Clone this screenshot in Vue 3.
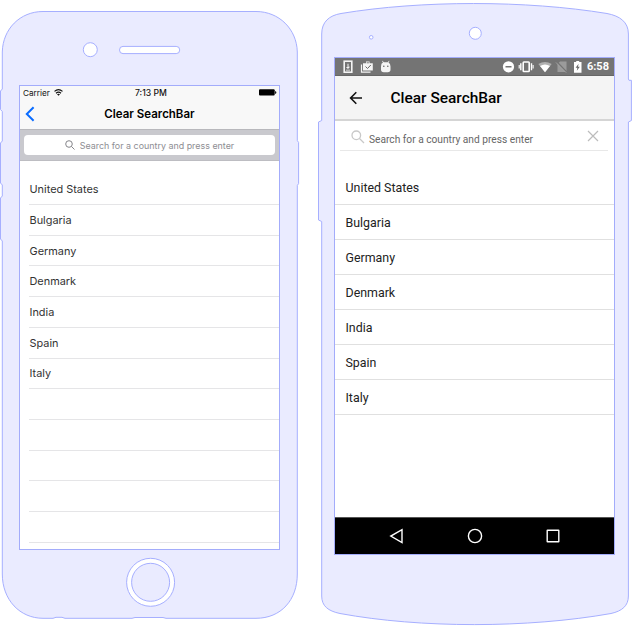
<script setup>
const countries = ['United States', 'Bulgaria', 'Germany', 'Denmark', 'India', 'Spain', 'Italy']
const iosRows = [...countries, '', '', '', '', '']
</script>

<template>
  <main class="stage">
    <section class="phone iphone">
      <svg class="shell" width="316" height="630" viewBox="0 0 316 630">
        <path class="body" d="M43 11.5H256C279 11.5 296.8 29 297.3 52V140.5L298.6 142.5V183.5L297.3 185.5V574C297.3 600 281 618.3 256 618.3H166L163 617.5H135L132 618.3H65L62 617.3H56L53 618.3H43C20 618.3 2.3 600 2.3 574V241L.5 239V198L2.3 196V185L.5 183V143L2.3 141V111.500L.5 109.500V91L2.300 89V52C2.800 29 20 11.500 43 11.500Z" />
        <circle class="hole" cx="90.300" cy="49.700" r="7" />
        <rect class="hole" x="119.500" y="46.400" width="60.200" height="7.200" rx="3.500" />
        <circle class="hole" cx="150.600" cy="582.300" r="24" />
        <circle class="body" cx="150.600" cy="582.300" r="19" />
      </svg>
      <div class="screen ios">
        <header class="ios-head">
          <div class="ios-status">
            <span class="carrier">Carrier</span>
            <svg class="wifi" width="9" height="7" viewBox="0 0 9 7" fill="none" stroke="#111" stroke-width="1.200">
              <path d="M.5 2.400Q4.500-1 8.500 2.400M2 4.200Q4.500 2.200 7 4.200" /><path d="M3 5.200 4.500 6.800 6 5.200Q4.500 4.200 3 5.200Z" fill="#111" stroke="none" />
            </svg>
            <span class="clock">7:13 PM</span>
            <svg class="battery" width="18" height="7" viewBox="0 0 18 7"><rect x="0" y=".3" width="15.700" height="6.200" rx="1" /><path d="M16.100 2.300h.7l.5.700v1l-.5.700h-.7z" /></svg>
          </div>
          <div class="ios-nav">
            <svg width="10" height="16" viewBox="0 0 10 16" fill="none" stroke="#0a6cff" stroke-width="2"><path d="M8.600 1.200 1.800 8 8.600 14.800" /></svg>
            <h1>Clear SearchBar</h1>
          </div>
        </header>
        <div class="ios-search">
          <div class="field">
            <svg width="10" height="10" viewBox="0 0 10 10" fill="none" stroke="#85858a" stroke-width="1"><circle cx="4" cy="4" r="3.300" /><path d="M6.400 6.400 9.500 9.500" /></svg>
            <span>Search for a country and press enter</span>
          </div>
        </div>
        <ul class="ios-list"><li v-for="(name, i) in iosRows" :key="i"><span>{{ name }}</span></li></ul>
      </div>
    </section>

    <section class="phone droid-phone">
      <svg class="shell" width="316" height="630" viewBox="0 0 316 630">
        <path class="body" d="M5.700 34C5.700 22 13 15.500 25 13.500C105 .2 210 .2 291 13.500C304 16 312.400 22 312.400 34V79L313 80.300H315.400V120.500L312.400 122V596C312.400 606 306 611 295 613.500C212 628.300 104 628.300 24 613.500C12 611 5.700 606 5.700 596V221.500L2.500 220V122L5.700 120.500Z" />
        <circle class="hole" cx="159.300" cy="33.300" r="6" /><circle class="hole" cx="55.200" cy="37.300" r="1.800" />
      </svg>
      <div class="screen droid">
        <div class="droid-status">
          <svg width="50" height="14" viewBox="0 0 50 14">
            <rect x="1.200" y="1.200" width="7.600" height="11" fill="none" stroke="#f4f4f4" stroke-width="1.600" />
            <path d="M4.500 3.800h1v3h1.600L5 9 2.900 7h1.600zM3 9.700h4v.8H3z" fill="#f4f4f4" />
            <path d="M18.500 4.500v7.700h9" fill="none" stroke="#f4f4f4" stroke-width="1.200" />
            <path d="M20 3.300h3V1.500h3.500v1.800h3.300v7.200H20z" fill="#f4f4f4" /><path d="M23.600 3.300v-1h2.300v1z" fill="#747474" /><path d="m22.500 6.500 2 2 3.300-3.500" fill="none" stroke="#666" />
            <path d="M38 6.400Q38 3.300 40 2.600L39 1l.5-.3 1.300 1.500h4L46 .7l.5.300-1 1.600Q47.500 3.700 47.500 6.400V9.500q0 2.700-2.700 2.700h-4Q38 12.200 38 9.500z" fill="#f4f4f4" /><circle cx="40.800" cy="6.200" r=".8" fill="#666" /><circle cx="44.800" cy="6.200" r=".8" fill="#666" />
          </svg>
          <span class="spacer"></span>
          <svg width="81" height="14" viewBox="0 0 81 14">
            <circle cx="6.500" cy="6.800" r="5.600" fill="#fff" /><path d="M3.500 6h6v1.500h-6z" fill="#747474" />
            <rect x="21.200" y="2" width="6" height="9.500" rx=".7" fill="none" stroke="#fff" stroke-width="1.600" /><path d="M18.800 3.300v7M29.500 3.300v7" stroke="#fff" stroke-width="1.400" /><path d="M17.200 5v3.600M31.100 5v3.600" stroke="#fff" stroke-width="1.100" />
            <path d="M36.300 4Q43-.1 49.700 4L43 12.200z" fill="#b0b0b0" /><path d="M38 6Q43 3 48 6L43 12.200z" fill="#fff" />
            <path d="M55.500 4 58 1.500h6.500V12h-9z" fill="#9b9b9b" /><path d="m54.500 1.500 10.500 11" stroke="#747474" stroke-width="1.600" /><path d="m54 2.500 10.200 10.200" stroke="#aaa" stroke-width=".8" />
            <path d="M72 2h2.200V.9h3V2h2.300v10.700H72z" fill="#fff" /><path d="m76.600 3.800-3 4h1.800l-.6 3 3-4H76z" fill="#666" />
          </svg>
          <span class="droid-clock">6:58</span>
        </div>
        <div class="toolbar">
          <svg width="14" height="14" viewBox="0 0 14 14" fill="none" stroke="#111" stroke-width="1.600"><path d="M7.300 1.300 1.600 7l5.700 5.700M1.600 7H13" /></svg>
          <h1>Clear SearchBar</h1>
        </div>
        <div class="droid-search">
          <svg class="mag" width="14" height="14" viewBox="0 0 14 14" fill="none" stroke="#c8c8c8" stroke-width="1.300"><circle cx="5.300" cy="5.300" r="4.300" /><path d="m8.500 8.500 4.500 4.500" /></svg>
          <span>Search for a country and press enter</span>
          <svg class="close" width="12" height="12" viewBox="0 0 12 12" stroke="#bcbcbc" stroke-width="1.200"><path d="m1 1 10 10M11 1 1 11" /></svg>
        </div>
        <ul class="droid-list"><li v-for="name in countries" :key="name"><span>{{ name }}</span></li></ul>
        <nav class="keys">
          <svg width="16" height="16" viewBox="0 0 16 16"><path d="M13 1.700v12.800L1.800 8.100z" /></svg>
          <svg width="16" height="16" viewBox="0 0 16 16"><circle cx="8" cy="8" r="6.600" /></svg>
          <svg width="16" height="16" viewBox="0 0 16 16"><rect x="2.200" y="2.200" width="11.600" height="11.600" rx=".3" /></svg>
        </nav>
      </div>
    </section>
  </main>
</template>

<style>
body { margin: 0; background: #fff; }
</style>

<style scoped>
* { box-sizing: border-box; }
h1, ul { margin: 0; padding: 0; }
ul { list-style: none; }
svg { display: block; flex: none; }
span, h1 { white-space: nowrap; }
.stage { display: flex; width: 632px; height: 630px; overflow: hidden; }
.phone { position: relative; width: 316px; height: 630px; }
.iphone { padding: 85px 36px 80px 19px; }
.droid-phone { padding: 57px 17px 75px 18px; }
.shell { position: absolute; inset: 0; }
.body { fill: #eaebff; stroke: #a6afff; stroke-width: 1; }
.hole { fill: #fff; stroke: #a6afff; stroke-width: 1; }
.screen { position: relative; height: 100%; display: flex; flex-direction: column; border: 1px solid #a3acfb; background: #fff; overflow: hidden; }
.ios { font-family: Inter, "Liberation Sans", sans-serif; }
.ios-head { height: 44px; background: #f8f8f8; border-bottom: 1px solid #b8b8bc; flex: none; }
.ios-status { display: grid; grid-template-columns: 31px 84px 1fr 20px; align-items: center; height: 13px; font-size: 8.200px; color: #111; }
.carrier { padding-left: 3px; }
.wifi { margin-left: 3px; }
.clock { font-weight: 500; font-size: 8.600px; }
.ios-nav { display: grid; grid-template-columns: 30px 1fr 30px; align-items: center; height: 30px; padding-left: 5px; }
.ios-nav h1 { font-size: 11.500px; font-weight: 600; line-height: 16px; text-align: center; padding-right: 5px; color: #000; }
.ios-search { height: 31px; flex: none; padding: 5px 4px; background: #c9c9ce; border-bottom: 1px solid #bdbdc2; }
.field { height: 20px; display: flex; align-items: center; justify-content: center; gap: 5px; border-radius: 4px; background: #fff; font-size: 8.920px; color: #8e8e93; }
.ios-list { padding: 13.400px 0 0 9px; }
.ios-list li { height: 30.700px; display: flex; align-items: center; border-bottom: 1px solid #e5e5e7; font-size: 10.900px; color: #333; }
.ios-list span { padding-left: .5px; }
.droid { font-family: Roboto, sans-serif; }
.droid-status { height: 18px; flex: none; display: flex; align-items: center; padding: 0 5px 0 8px; background: #747474; border-bottom: 1px solid #666; }
.spacer { flex: 1; }
.droid-clock { margin-left: 4px; color: #fff; font-size: 11px; font-weight: 700; }
.toolbar { height: 45px; flex: none; display: flex; align-items: center; gap: 27.500px; padding-left: 14px; background: #f4f4f4; border-bottom: 2px solid #d5d5d5; }
.toolbar h1 { font-size: 15.450px; font-weight: 500; color: #000; padding-top: 1px; }
.droid-search { height: 30px; flex: none; margin: 0 6px 0 5px; display: flex; align-items: center; border-bottom: 1px solid #e8e8e8; font-size: 10.200px; color: #666; }
.mag { margin: 3px 0 0 11px; }
.droid-search span { margin: 8px 0 0 4px; flex: 1; }
.close { margin: 1px 9px 0 0; }
.droid-list { padding-top: 19px; flex: 1; }
.droid-list li { height: 35px; display: flex; align-items: center; padding-left: 10.500px; border-bottom: 1px solid #e0e0e0; font-size: 12.400px; color: #222; }
.keys { height: 37px; flex: none; display: flex; align-items: center; justify-content: center; gap: 62px; background: #000; border-top: 1px solid #555; }
.keys path, .keys circle, .keys rect { fill: none; stroke: #fff; stroke-width: 1.400; }
</style>
